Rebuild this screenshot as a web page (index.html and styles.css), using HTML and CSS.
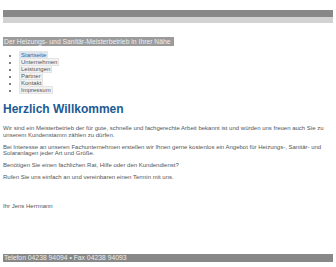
FILE: index.html
```html
<!DOCTYPE html>
<html>
<head>
    <title>Heizung und Sanitär</title>
    <link rel="stylesheet" href="styles.css">
</head>
<body>
    <div class="page">
        <div class="top-bar"></div>
        <div class="sub-bar"></div>

        <div class="tagline">Der Heizungs- und Sanitär-Meisterbetrieb in Ihrer Nähe</div>

        <ul class="nav">
            <li><a class="active" href="#">Startseite</a></li>
            <li><a href="#">Unternehmen</a></li>
            <li><a href="#">Leistungen</a></li>
            <li><a href="#">Partner</a></li>
            <li><a href="#">Kontakt</a></li>
            <li><a href="#">Impressum</a></li>
        </ul>

        <div class="content">
            <h1>Herzlich Willkommen</h1>
            <p>Wir sind ein Meisterbetrieb der für gute, schnelle und fachgerechte Arbeit bekannt ist und würden uns freuen auch Sie zu unserem Kundenstamm zählen zu dürfen.</p>
            <p>Bei Interesse an unseren Fachunternehmen erstellen wir Ihnen gerne kostenlos ein Angebot für Heizungs-, Sanitär- und Solaranlagen jeder Art und Größe.</p>
            <p>Benötigen Sie einen fachlichen Rat, Hilfe oder den Kundendienst?</p>
            <p>Rufen Sie uns einfach an und vereinbaren einen Termin mit uns.</p>
            <p class="signature">Ihr Jens Herrmann</p>
        </div>

        <div class="footer">Telefon 04238 94094 &bull; Fax 04238 94093</div>
    </div>
</body>
</html>
```

FILE: styles.css
```css
body {
    margin: 0;
    background: #fff;
    font-family: "Liberation Sans", Arial, sans-serif;
    color: #555;
}

.page {
    margin: 0 3px;
    padding-top: 10px;
}

.top-bar {
    height: 7px;
    background-color: #888;
}

.sub-bar {
    height: 6px;
    background-color: #d2d2d2;
}

.tagline {
    display: inline-block;
    margin-top: 14px;
    padding: 1px 3px 1px 1px;
    background-color: #9b9b9b;
    color: #eee;
    font-size: 6.8px;
    line-height: 7px;
}

.nav {
    margin: 4px 0 0 0;
    padding-left: 16px;
    font-size: 6px;
    line-height: 7px;
}

    .nav a {
        color: #555;
        text-decoration: none;
        background-color: #f2f2f2;
        border: 1px solid #e4e4e4;
        padding: 0 1px;
    }

    .nav a.active {
        color: #2a6aa8;
        background-color: #dde6ee;
    }

.content {
    margin-top: 8px;
}

h1 {
    margin: 0 0 9px 0;
    font-size: 12px;
    color: #1c5a94;
}

.content p {
    margin: 0 0 5.5px 0;
    font-size: 6px;
    line-height: 6.5px;
}

.content p.signature {
    margin-top: 22px;
}

.footer {
    margin-top: 45px;
    padding: 0 1px;
    background-color: #888;
    color: #eee;
    font-size: 6.8px;
    line-height: 8px;
}
```
